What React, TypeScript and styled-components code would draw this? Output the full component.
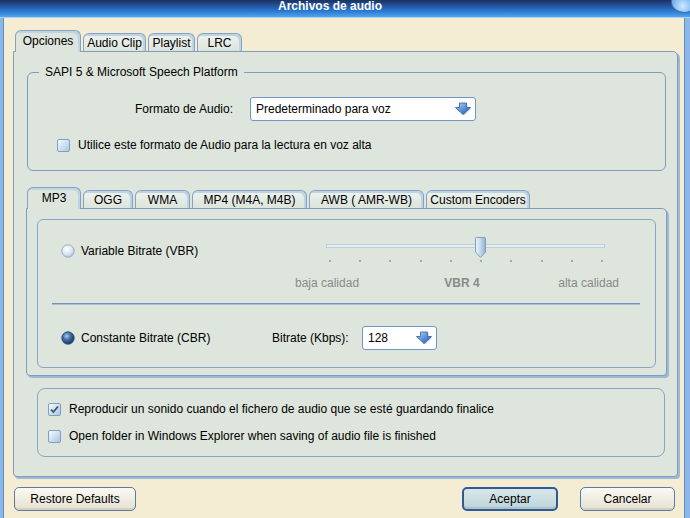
import React from 'react'
import styled, { createGlobalStyle } from 'styled-components'

const GlobalStyle = createGlobalStyle`
    * { box-sizing: border-box; }
    body {
        margin: 0;
        font-family: "Liberation Sans", Arial, sans-serif;
        font-size: 12px;
        color: #000;
        background: #f4ecd3;
    }
`

const mainTabs = [
    { label: 'Opciones', w: 66 },
    { label: 'Audio Clip', w: 63 },
    { label: 'Playlist', w: 47 },
    { label: 'LRC', w: 45 },
]

const formatTabs = [
    { label: 'MP3', w: 54 },
    { label: 'OGG', w: 50 },
    { label: 'WMA', w: 55 },
    { label: 'MP4 (M4A, M4B)', w: 115 },
    { label: 'AWB ( AMR-WB)', w: 115 },
    { label: 'Custom Encoders', w: 104 },
]

function DropArrow() {
    return (
        <StArrow width="17" height="14" viewBox="0 0 17 14">
            <defs>
                <linearGradient id="arrowGrad" x1="0" y1="0" x2="1" y2="1">
                    <stop offset="0" stopColor="#b9d6f6" />
                    <stop offset="0.5" stopColor="#5b95d8" />
                    <stop offset="1" stopColor="#1f56a4" />
                </linearGradient>
            </defs>
            <path d="M5.5 2 H12.5 V6.5 H16.5 L9 13.5 L1.5 6.5 H5.5 Z" fill="#9fb3c8" opacity="0.6" />
            <path d="M4.5 1 H11.5 V5.5 H15.5 L8 12.5 L0.5 5.5 H4.5 Z" fill="url(#arrowGrad)" stroke="#2d5e9e" strokeWidth="0.8" strokeLinejoin="round" />
        </StArrow>
    )
}

function Select({ value, width }: { value: string; width: number }) {
    return (
        <StSelect $w={width}>
            <span>{value}</span>
            <DropArrow />
        </StSelect>
    )
}

function CheckBox({ checked }: { checked?: boolean }) {
    return (
        <StCheck>
            {checked && (
                <svg width="11" height="11" viewBox="0 0 11 11">
                    <path d="M2 5.5 L4.3 8 L9 2.5" fill="none" stroke="#4a4f58" strokeWidth="1.8" />
                </svg>
            )}
        </StCheck>
    )
}

function Radio({ checked }: { checked?: boolean }) {
    const id = checked ? 'radioOn' : 'radioOff'
    return (
        <svg width="14" height="14" viewBox="0 0 14 14">
            <defs>
                {checked ? (
                    <radialGradient id={id} cx="0.4" cy="0.35" r="0.7">
                        <stop offset="0" stopColor="#a9c9ea" />
                        <stop offset="0.45" stopColor="#3c6ea6" />
                        <stop offset="1" stopColor="#10305c" />
                    </radialGradient>
                ) : (
                    <radialGradient id={id} cx="0.4" cy="0.35" r="0.7">
                        <stop offset="0" stopColor="#ffffff" />
                        <stop offset="0.6" stopColor="#dbe6ef" />
                        <stop offset="1" stopColor="#a9bfd6" />
                    </radialGradient>
                )}
            </defs>
            <circle cx="7" cy="7" r="6.2" fill={`url(#${id})`} stroke={checked ? '#2b4a73' : '#8ea6bf'} strokeWidth="0.9" />
        </svg>
    )
}

function Thumb() {
    return (
        <StThumb width="11" height="21" viewBox="0 0 11 21">
            <defs>
                <linearGradient id="thumbGrad" x1="0" y1="0" x2="1" y2="0">
                    <stop offset="0" stopColor="#eef5fb" />
                    <stop offset="0.5" stopColor="#c4d8ea" />
                    <stop offset="1" stopColor="#8fb0cf" />
                </linearGradient>
            </defs>
            <path d="M1.5 0.5 H9.5 Q10.5 0.5 10.5 1.5 V15 L5.5 20.5 L0.5 15 V1.5 Q0.5 0.5 1.5 0.5 Z" fill="url(#thumbGrad)" stroke="#7f9fbf" strokeWidth="1" />
        </StThumb>
    )
}

function App() {
    return (
        <>
            <GlobalStyle />
            <StWindow>
                <StTitleBar>
                    Archivos de audio
                    <StTitleOrb />
                </StTitleBar>
                <StFrame>
                    <StTabStrip $pl={2}>
                        {mainTabs.map((t, i) => (
                            <StTab key={t.label} $w={t.w} $active={i === 0}>{t.label}</StTab>
                        ))}
                    </StTabStrip>
                    <StMainPanel>
                        <StGroup>
                            <StLegend>SAPI 5 &amp; Microsoft Speech Platform</StLegend>
                            <StFormatRow>
                                <StFormatLabel>Formato de Audio:</StFormatLabel>
                                <Select value="Predeterminado para voz" width={226} />
                            </StFormatRow>
                            <StCheckRow $pl={29} $mt={17}>
                                <CheckBox />
                                <span>Utilice este formato de Audio para la lectura en voz alta</span>
                            </StCheckRow>
                        </StGroup>

                        <StInnerTabs>
                            <StTabStrip $pl={1}>
                                {formatTabs.map((t, i) => (
                                    <StTab key={t.label} $w={t.w} $active={i === 0}>{t.label}</StTab>
                                ))}
                            </StTabStrip>
                            <StInnerPanel>
                                <StBitrateBox>
                                    <StVbrRow>
                                        <StRadioLabel $mt={24}>
                                            <Radio />
                                            <span>Variable Bitrate (VBR)</span>
                                        </StRadioLabel>
                                        <StSlider>
                                            <StTrackArea>
                                                <StTrack />
                                                <Thumb />
                                            </StTrackArea>
                                            <StTicks>
                                                {Array.from({ length: 10 }).map((_, i) => <StTick key={i} />)}
                                            </StTicks>
                                            <StSliderLabels>
                                                <span>baja calidad</span>
                                                <StVbrValue>VBR 4</StVbrValue>
                                                <span>alta calidad</span>
                                            </StSliderLabels>
                                        </StSlider>
                                    </StVbrRow>
                                    <StSeparator />
                                    <StCbrRow>
                                        <StRadioLabel $mt={0}>
                                            <Radio checked />
                                            <span>Constante Bitrate (CBR)</span>
                                        </StRadioLabel>
                                        <StBitrateLabel>Bitrate (Kbps):</StBitrateLabel>
                                        <Select value="128" width={75} />
                                    </StCbrRow>
                                </StBitrateBox>
                            </StInnerPanel>
                        </StInnerTabs>

                        <StBottomGroup>
                            <StCheckRow $pl={10} $mt={0}>
                                <CheckBox checked />
                                <span>Reproducir un sonido cuando el fichero de audio que se esté guardando finalice</span>
                            </StCheckRow>
                            <StCheckRow $pl={10} $mt={13}>
                                <CheckBox />
                                <span>Open folder in Windows Explorer when saving of audio file is finished</span>
                            </StCheckRow>
                        </StBottomGroup>
                    </StMainPanel>

                    <StButtonRow>
                        <StButton $w={122}>Restore Defaults</StButton>
                        <StSpacer />
                        <StButton $w={96} $primary>Aceptar</StButton>
                        <StButton $w={95}>Cancelar</StButton>
                    </StButtonRow>
                </StFrame>
            </StWindow>
        </>
    )
}

export default App

const StWindow = styled.div`
    width: 690px;
    height: 518px;
    display: flex;
    flex-direction: column;
    overflow: hidden;
`

const StTitleBar = styled.div`
    position: relative;
    height: 18px;
    flex-shrink: 0;
    padding: 0 30px 0 0;
    display: flex;
    justify-content: center;
    align-items: flex-start;
    line-height: 12px;
    color: #fff;
    font-weight: bold;
    font-size: 12px;
    background: linear-gradient(#1b3264 0%, #234f92 30%, #2a78d2 65%, #4fa5ec 100%);
    border-bottom: 1px solid #a8d2f3;
`

const StTitleOrb = styled.span`
    position: absolute;
    right: -7px;
    top: -9px;
    width: 26px;
    height: 22px;
    border-radius: 50%;
    border: 1px solid #3c6fb0;
    background: radial-gradient(circle at 45% 70%, #cfe8ff 0%, #7db9f0 50%, #3b7cc9 100%);
`

const StFrame = styled.div`
    flex: 1;
    display: flex;
    flex-direction: column;
    padding: 12px 7px 0 10px;
    border-left: 3px solid #8db6e9;
    border-right: 5px solid #8db6e9;
    box-shadow: inset 1px 0 0 #5f8fc8, inset -1px 0 0 #5f8fc8;
    background: #f4ecd3;
`

const StTabStrip = styled.div<{ $pl: number }>`
    display: flex;
    align-items: flex-end;
    gap: 2px;
    height: 21px;
    padding-left: ${(p) => p.$pl}px;
    position: relative;
    z-index: 1;
`

const StTab = styled.div<{ $w: number; $active?: boolean }>`
    width: ${(p) => p.$w}px;
    height: ${(p) => (p.$active ? 22 : 18)}px;
    margin-bottom: ${(p) => (p.$active ? -1 : 0)}px;
    display: flex;
    justify-content: center;
    align-items: ${(p) => (p.$active ? 'flex-start' : 'center')};
    padding-top: ${(p) => (p.$active ? 3 : 1)}px;
    border: 1px solid #87a2bf;
    border-bottom: none;
    border-radius: 6px 6px 0 0;
    background: ${(p) => (p.$active ? '#dde5dc' : 'linear-gradient(#eef3ee, #dce4db)')};
    box-shadow: inset -2px 2px 0 #bcd3e8;
    white-space: nowrap;
    flex-shrink: 0;
`

const StMainPanel = styled.div`
    height: 426px;
    border: 1px solid #7f9db9;
    border-radius: 0 5px 4px 4px;
    background: #dde5dc;
    box-shadow: 2px 2px 0 #9fb8d3;
    display: flex;
    flex-direction: column;
    padding-top: 13px;
`

const StGroup = styled.fieldset`
    margin: 0 11px 0 13px;
    height: 106px;
    padding: 18px 0 0 0;
    border: 1px solid #7f9db9;
    border-radius: 6px;
    min-width: 0;
`

const StLegend = styled.legend`
    margin-left: 11px;
    padding: 0 6px;
    line-height: 14px;
`

const StFormatRow = styled.div`
    display: flex;
    align-items: center;
    gap: 17px;
`

const StFormatLabel = styled.span`
    width: 205px;
    text-align: right;
`

const StSelect = styled.div<{ $w: number }>`
    width: ${(p) => p.$w}px;
    height: 24px;
    display: flex;
    align-items: center;
    justify-content: space-between;
    padding: 0 3px 0 5px;
    background: #fff;
    border: 1px solid #7096c8;
    border-radius: 3px;
`

const StArrow = styled.svg`
    display: block;
`

const StCheckRow = styled.div<{ $pl: number; $mt: number }>`
    display: flex;
    align-items: center;
    gap: 8px;
    height: 14px;
    padding-left: ${(p) => p.$pl}px;
    margin-top: ${(p) => p.$mt}px;
    white-space: nowrap;
`

const StCheck = styled.span`
    width: 13px;
    height: 13px;
    flex-shrink: 0;
    display: flex;
    justify-content: center;
    align-items: center;
    border: 1px solid #7f9fc2;
    border-radius: 2px;
    background: linear-gradient(135deg, #f6fafd 0%, #d3e3f3 45%, #aac6e4 100%);
`

const StInnerTabs = styled.div`
    margin: 16px 10px 0 12px;
`

const StInnerPanel = styled.div`
    height: 168px;
    border: 1px solid #7f9db9;
    border-radius: 0 5px 4px 4px;
    background: #dde5dc;
    box-shadow: 2px 2px 0 #9fb8d3;
    padding: 10px 10px 0 10px;
`

const StBitrateBox = styled.div`
    height: 149px;
    border: 1px solid #8aa5c2;
    border-radius: 6px;
    display: flex;
    flex-direction: column;
`

const StVbrRow = styled.div`
    height: 83px;
    display: grid;
    grid-template-columns: 254px 330px;
    align-items: start;
`

const StRadioLabel = styled.div<{ $mt: number }>`
    display: flex;
    align-items: center;
    gap: 6px;
    height: 14px;
    margin-top: ${(p) => p.$mt}px;
    padding-left: 23px;
    white-space: nowrap;
`

const StSlider = styled.div`
    padding-top: 17px;
`

const StTrackArea = styled.div`
    position: relative;
    height: 21px;
`

const StTrack = styled.div`
    position: absolute;
    left: 34px;
    top: 7px;
    width: 279px;
    height: 4px;
    border: 1px solid #bccfdc;
    background: #e8eef0;
`

const StThumb = styled.svg`
    position: absolute;
    left: 183px;
    top: 0;
`

const StTicks = styled.div`
    margin: 2px 0 0 37px;
    width: 274px;
    height: 2px;
    display: flex;
    justify-content: space-between;
`

const StTick = styled.span`
    width: 2px;
    height: 2px;
    background: #94aac0;
`

const StSliderLabels = styled.div`
    margin-top: 14px;
    padding-left: 3px;
    width: 327px;
    display: grid;
    grid-template-columns: 1fr auto 1fr;
    color: #8a8a8a;
    line-height: 14px;
    & > span:last-child {
        text-align: right;
    }
`

const StVbrValue = styled.span`
    font-weight: bold;
    padding-left: 10px;
`

const StSeparator = styled.div`
    height: 2px;
    margin: 0 15px 0 14px;
    background: #7393bb;
    border-bottom: 1px solid #a9bfd8;
`

const StCbrRow = styled.div`
    display: grid;
    grid-template-columns: 234px 90px auto;
    align-items: center;
    height: 24px;
    margin-top: 21px;
`

const StBitrateLabel = styled.span`
    white-space: nowrap;
`

const StBottomGroup = styled.div`
    margin: 12px 12px 0 23px;
    height: 69px;
    border: 1px solid #8aa5c2;
    border-radius: 8px;
    padding-top: 13px;
`

const StButtonRow = styled.div`
    display: flex;
    align-items: center;
    gap: 22px;
    margin: 10px 3px 0 1px;
`

const StSpacer = styled.div`
    flex: 1;
`

const StButton = styled.div<{ $w: number; $primary?: boolean }>`
    width: ${(p) => p.$w}px;
    height: 24px;
    display: flex;
    justify-content: center;
    align-items: center;
    border: ${(p) => (p.$primary ? '2px solid #2f5a96' : '1px solid #5a7ba6')};
    border-radius: 5px;
    background: ${(p) => (p.$primary
        ? 'linear-gradient(#d9e8ea, #bdd3d8)'
        : 'linear-gradient(#fbf9f2, #e5e1d2)')};
    box-shadow: inset 0 -2px 0 ${(p) => (p.$primary ? '#a9c3cc' : '#d6d1bf')};
`
